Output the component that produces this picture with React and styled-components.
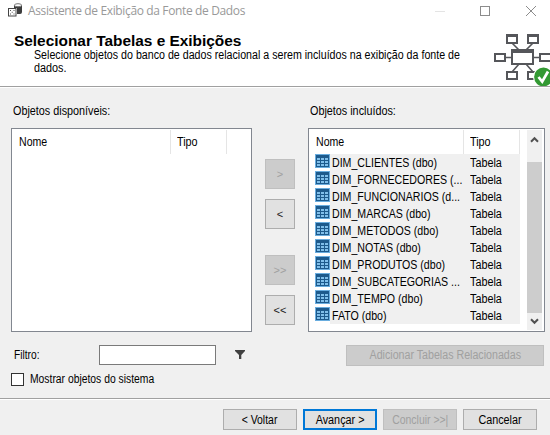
import React from "react";
import styled, { createGlobalStyle } from "styled-components";

const Global = createGlobalStyle`
  * { box-sizing: border-box; }
  body { margin: 0; background: #f0f0f0; overflow: hidden; }
`;

const Dialog = styled.div`
  width: 550px;
  height: 435px;
  display: flex;
  flex-direction: column;
  overflow: hidden;
  background: #f0f0f0;
  color: #000;
  font: 12px/14px "Liberation Sans", sans-serif;
  white-space: nowrap;
`;

const Label = styled.span`
  display: inline-block;
  transform: scaleX(${(p) => p.$sx || 0.9});
  transform-origin: ${(p) => (p.$center ? "center" : "left")};
`;

const TitleBar = styled.header`
  height: 22px;
  flex: none;
  display: flex;
  align-items: center;
  padding: 0 13px 0 8px;
  background: #fff;
  color: #999;
  svg { flex: none; }
`;

const TitleText = styled.span`
  flex: 1;
  margin-left: 6px;
  font: 12px/16px "Open Sans", "Noto Sans", sans-serif;
  letter-spacing: -0.36px;
`;

const Banner = styled.section`
  height: 66px;
  flex: none;
  display: flex;
  justify-content: space-between;
  background: #fff;
  border-bottom: 1px solid #fff;
  box-shadow: inset 0 -1px #a0a0a0;
`;

const BannerCopy = styled.div`
  width: 493px;
  flex: none;
  padding: 12px 0 0 14px;
`;

const Heading = styled.h1`
  margin: 0;
  font: bold 14px/15px "Liberation Sans", sans-serif;
  transform: scaleX(1.1);
  transform-origin: left;
`;

const Description = styled.p`
  margin: 0 0 0 20px;
  line-height: 13px;
`;

const BannerArt = styled.div`
  width: 57px;
  height: 57px;
  flex: none;
  margin-top: 7px;
`;

const Body = styled.main`
  height: 310px;
  flex: none;
  padding: 16px 5px 0 11px;
`;

const Columns = styled.div`
  display: grid;
  grid-template-columns: 241px 30px 237px;
  column-gap: 13px;
`;

const Caption = styled.div`
  height: 24px;
  padding: 0 0 0 2px;
`;

const ListBox = styled.div`
  height: 204px;
  display: flex;
  justify-content: space-between;
  border: 1px solid #828790;
  background: #fff;
  padding: 1px 2px 1px 1px;
`;

const HeaderRow = styled.div`
  height: 24px;
  display: flex;
`;

const HeaderCell = styled.div`
  width: ${(p) => p.$w}px;
  padding: 5px 0 0 6px;
  border-right: 1px solid #e5e5e5;
`;

const Row = styled.div`
  height: 17px;
  display: flex;
  margin-left: 5px;
`;

const RowName = styled.div`
  width: 133px;
  padding: 2px 0 0 2px;
  background: #f0f0f0;
`;

const RowType = styled.div`
  width: 57px;
  padding: 2px 0 0 7px;
  background: #f0f0f0;
`;

const ScrollBar = styled.div`
  width: 15px;
  display: flex;
  flex-direction: column;
  background: #f0f0f0;
`;

const ScrollArrow = styled.div`
  height: ${(p) => p.$h}px;
  display: flex;
  align-items: center;
  justify-content: center;
  padding-bottom: ${(p) => p.$lift || 0}px;
`;

const Thumb = styled.div`
  height: 151px;
  background: #cdcdcd;
`;

const Movers = styled.div`
  display: flex;
  flex-direction: column;
  gap: 10px;
  padding-top: 55px;
`;

const Button = styled.button`
  width: ${(p) => p.$w}px;
  height: 21px;
  flex: none;
  padding: 0;
  border: ${(p) => (p.$primary ? "2px solid #0078d7" : "1px solid #adadad")};
  background: #e1e1e1;
  color: #000;
  font: inherit;
  &:disabled { border-color: #bfbfbf; background: #ccc; color: #a0a0a0; }
`;

const MoveButton = styled(Button)`
  width: 30px;
  height: 30px;
  margin-top: ${(p) => p.$group || 0}px;
  font-size: 11px;
  color: #222;
`;

const FilterRow = styled.div`
  height: 22px;
  display: flex;
  align-items: center;
  margin-top: 12px;
  padding-left: 3px;
`;

const FilterLabel = styled.label`
  width: 85px;
`;

const FilterInput = styled.input`
  width: 117px;
  height: 20px;
  margin-right: 19px;
  border: 1px solid #7a7a7a;
  background: #fff;
  padding: 0;
`;

const Related = styled.div`
  margin-left: auto;
  padding-right: 1px;
  height: 21px;
  display: flex;
`;

const CheckRow = styled.label`
  display: flex;
  align-items: center;
  gap: 6px;
  height: 14px;
  margin-top: 6px;
`;

const CheckBox = styled.span`
  width: 13px;
  height: 13px;
  border: 1px solid #333;
  background: #fff;
`;

const Footer = styled.footer`
  flex: 1;
  display: flex;
  justify-content: flex-end;
  gap: 6px;
  padding: 10px 13px 0 0;
  border-top: 1px solid #a0a0a0;
  box-shadow: inset 0 1px #fff;
`;

const AppIcon = () => (
  <svg width="14" height="16" viewBox="0 0 14 16">
    <path d="M6 2V11H12Q14 11 14 9V2Z" fill="#3d3d3d" />
    <ellipse cx="10" cy="2.2" rx="3.6" ry="1.5" fill="#fff" stroke="#777" />
    <rect x="0" y="5" width="9" height="9" fill="#fff" />
    <rect x=".5" y="5.5" width="7.5" height="7.5" fill="#fff" stroke="#444" />
    <path d="M2 7h1v1H2zM5.5 7h1v1h-1zM2 10.5h1v1H2zM5.5 10.5h1v1h-1zM3.7 8.8h1v1h-1z" fill="#555" />
  </svg>
);

const WindowControls = () => (
  <svg width="102" height="12" viewBox="0 0 102 12" fill="none" stroke="#8c8c8c">
    <path d="M0 6.5h10" stroke="#e4e4e4" />
    <rect x="45.5" y="1.5" width="9" height="9" />
    <path d="M91 1l10 10M101 1L91 11" />
  </svg>
);

const SchemaIcon = () => (
  <svg width="57" height="57" viewBox="0 0 57 57" fill="none" stroke="#55565a" strokeWidth="2">
    <path d="M19 14l7 7M40 14l-7 7M19 43l7-8M40 43l-7-8M12 28.5h7M40 28.5h7" strokeWidth="1.6" />
    <g fill="#fff">
      <path d="M14 7h10v7H14zM35 7h10v7H35zM2 25h10v7H2zM47 25h12v7H47zM14 43h10v7H14zM35 43h10v7H35z" />
      <path d="M19 21h21v14H19z" />
    </g>
    <path d="M13 6.5h12M34 6.5h12" strokeWidth="3" />
    <path d="M18 22h23" strokeWidth="4" />
    <circle cx="50.5" cy="48" r="10.5" fill="#fff" stroke="none" />
    <circle cx="50.5" cy="48" r="9.4" fill="#339933" stroke="none" />
    <path d="M45.5 48l3.7 4.7L55 42.5" stroke="#fff" strokeWidth="2.7" />
  </svg>
);

const TableIcon = () => (
  <svg width="15" height="14" viewBox="0 0 15 14">
    <path d="M0 0h15v14H0z" fill="#69addf" />
    <path d="M1 1h13v12H1z" fill="#1d5a8c" />
    <path d="M2 4h3v2H2zM6 4h3v2H6zM10 4h3v2h-3zM2 7h3v2H2zM6 7h3v2H6zM10 7h3v2h-3zM2 10h3v2H2zM6 10h3v2H6zM10 10h3v2h-3z" fill="#80bfea" />
  </svg>
);

const Chevron = ({ down }) => (
  <svg width="9" height="7" viewBox="0 0 9 7" fill="none" stroke="#505050" strokeWidth="2">
    <path d={down ? "M1 1.3l3.5 3.5L8 1.3" : "M1 5.7l3.5-3.5L8 5.7"} />
  </svg>
);

const FunnelIcon = () => (
  <svg width="10" height="10" viewBox="0 0 10 10">
    <path d="M0 0h10v1L6.3 5v4H4V5L0 1z" fill="#404040" />
  </svg>
);

const tables = [
  "DIM_CLIENTES (dbo)",
  "DIM_FORNECEDORES (...",
  "DIM_FUNCIONARIOS (d...",
  "DIM_MARCAS (dbo)",
  "DIM_METODOS (dbo)",
  "DIM_NOTAS (dbo)",
  "DIM_PRODUTOS (dbo)",
  "DIM_SUBCATEGORIAS ...",
  "DIM_TEMPO (dbo)",
  "FATO (dbo)",
];

export default function App() {
  return (
    <Dialog>
      <Global />
      <TitleBar>
        <AppIcon />
        <TitleText>Assistente de Exibição da Fonte de Dados</TitleText>
        <WindowControls />
      </TitleBar>
      <Banner>
        <BannerCopy>
          <Heading>Selecionar Tabelas e Exibições</Heading>
          <Description>
            <Label $sx={0.888}>Selecione objetos do banco de dados relacional a serem incluídos na exibição da fonte de</Label>
            <br />
            <Label>dados.</Label>
          </Description>
        </BannerCopy>
        <BannerArt><SchemaIcon /></BannerArt>
      </Banner>
      <Body>
        <Columns>
          <div>
            <Caption><Label>Objetos disponíveis:</Label></Caption>
            <ListBox>
              <HeaderRow>
                <HeaderCell $w={158}><Label $sx={0.88}>Nome</Label></HeaderCell>
                <HeaderCell $w={56}><Label>Tipo</Label></HeaderCell>
              </HeaderRow>
            </ListBox>
          </div>
          <Movers>
            <MoveButton disabled>&gt;</MoveButton>
            <MoveButton>&lt;</MoveButton>
            <MoveButton $group={16} disabled>&gt;&gt;</MoveButton>
            <MoveButton>&lt;&lt;</MoveButton>
          </Movers>
          <div>
            <Caption><Label>Objetos incluídos:</Label></Caption>
            <ListBox>
              <div>
                <HeaderRow>
                  <HeaderCell $w={154}><Label $sx={0.88}>Nome</Label></HeaderCell>
                  <HeaderCell $w={56}><Label>Tipo</Label></HeaderCell>
                </HeaderRow>
                {tables.map((name) => (
                  <Row key={name}>
                    <TableIcon />
                    <RowName><Label $sx={0.885}>{name}</Label></RowName>
                    <RowType><Label>Tabela</Label></RowType>
                  </Row>
                ))}
              </div>
              <ScrollBar>
                <ScrollArrow $h={32} $lift={14}><Chevron /></ScrollArrow>
                <Thumb />
                <ScrollArrow $h={17}><Chevron down /></ScrollArrow>
              </ScrollBar>
            </ListBox>
          </div>
        </Columns>
        <FilterRow>
          <FilterLabel><Label $sx={0.85}>Filtro:</Label></FilterLabel>
          <FilterInput />
          <FunnelIcon />
          <Related>
            <Button $w={198} disabled><Label $center $sx={0.888}>Adicionar Tabelas Relacionadas</Label></Button>
          </Related>
        </FilterRow>
        <CheckRow>
          <CheckBox />
          <Label $sx={0.862}>Mostrar objetos do sistema</Label>
        </CheckRow>
      </Body>
      <Footer>
        <Button $w={74}><Label $center $sx={0.87}>&lt; Voltar</Label></Button>
        <Button $w={74} $primary><Label $center>Avançar &gt;</Label></Button>
        <Button $w={74} disabled><Label $center $sx={0.87}>Concluir &gt;&gt;|</Label></Button>
        <Button $w={74}><Label $center>Cancelar</Label></Button>
      </Footer>
    </Dialog>
  );
}
